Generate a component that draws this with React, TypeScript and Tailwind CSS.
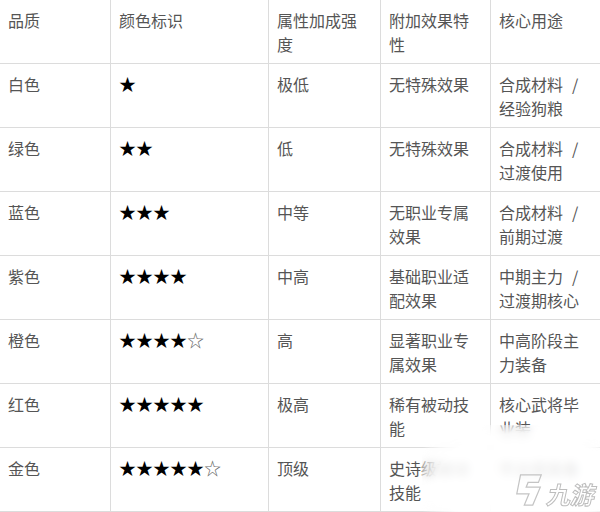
import React from "react";

type Row = [string, React.ReactNode, string, string, React.ReactNode];

const Stars = ({ full, empty = 0 }: { full: number; empty?: number }) => (
  <span className="text-black text-[17px]">
    {"★".repeat(full)}
    {empty > 0 && <span className="text-[#666]">{"☆".repeat(empty)}</span>}
  </span>
);

const Use = ({ a, b }: { a: string; b: string }) => (
  <>
    {a}
    <span className="ml-[9px]">/</span> {b}
  </>
);

const rows: Row[] = [
  ["白色", <Stars full={1} />, "极低", "无特殊效果", <Use a="合成材料" b="经验狗粮" />],
  ["绿色", <Stars full={2} />, "低", "无特殊效果", <Use a="合成材料" b="过渡使用" />],
  ["蓝色", <Stars full={3} />, "中等", "无职业专属效果", <Use a="合成材料" b="前期过渡" />],
  ["紫色", <Stars full={4} />, "中高", "基础职业适配效果", <Use a="中期主力" b="过渡期核心" />],
  ["橙色", <Stars full={4} empty={1} />, "高", "显著职业专属效果", "中高阶段主力装备"],
  ["红色", <Stars full={5} />, "极高", "稀有被动技能", "核心武将毕业装"],
  ["金色", <Stars full={5} empty={1} />, "顶级", "史诗级被动技能", "毕业级装备"],
];

const widths = ["w-[111px]", "w-[158px]", "w-[112px]", "w-[110px]", "w-[109px]"];

function Cell({ children, i }: { children: React.ReactNode; i: number }) {
  return (
    <div
      className={`${widths[i]} shrink-0 h-full pl-2 pr-3 pt-2 ${i < 4 ? "border-r border-[#dcdcdc]" : ""}`}
    >
      {children}
    </div>
  );
}

export default function App() {
  const header = ["品质", "颜色标识", "属性加成强度", "附加效果特性", "核心用途"];
  return (
    <div
      className="relative w-[600px] h-[512px] overflow-hidden bg-white text-[16px] leading-[24px] text-[#555]"
      style={{ fontFamily: '"Noto Sans CJK SC", "Noto Sans", sans-serif' }}
    >
      <div className="flex flex-col">
        <div className="flex h-[64px] border-b border-[#dcdcdc]">
          {header.map((h, i) => (
            <Cell key={i} i={i}>
              {h}
            </Cell>
          ))}
        </div>
        {rows.map((r, ri) => (
          <div key={ri} className="flex h-[64px] border-b border-[#dcdcdc]">
            {r.map((c, i) => (
              <Cell key={i} i={i}>
                {c}
              </Cell>
            ))}
          </div>
        ))}
      </div>
      {/* watermark */}
      <div className="absolute left-[422px] top-[425px] w-[200px] h-[110px] rounded-[30px] bg-white/85 backdrop-blur-[4px] [mask-image:radial-gradient(ellipse_at_center,black_60%,transparent_82%)]" />
      <div className="absolute left-[513px] top-[470px] flex items-center gap-[3px] whitespace-nowrap">
        <svg width="32" height="40" viewBox="0 0 34 40" fill="none" stroke="#c4c4c4" strokeWidth="1.3">
          <path d="M8 4 L30 4 L27 12 L16 12 L14 17 L24 17 L29 17 L21 36 L12 36 L17 24 L8 24 L4 24 Z" />
        </svg>
        <span
          className="text-[24px] leading-[28px] font-bold text-white [-webkit-text-stroke:1px_#bdbdbd] -skew-x-12 mt-[8px]"
          style={{ fontFamily: '"Noto Sans CJK SC", sans-serif' }}
        >
          九游
        </span>
      </div>
    </div>
  );
}
